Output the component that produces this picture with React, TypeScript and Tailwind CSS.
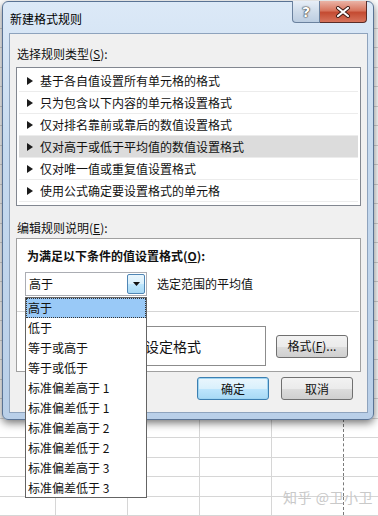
import React from "react";

const rules = [
  "基于各自值设置所有单元格的格式",
  "只为包含以下内容的单元格设置格式",
  "仅对排名靠前或靠后的数值设置格式",
  "仅对高于或低于平均值的数值设置格式",
  "仅对唯一值或重复值设置格式",
  "使用公式确定要设置格式的单元格",
];

const options = [
  "高于",
  "低于",
  "等于或高于",
  "等于或低于",
  "标准偏差高于 1",
  "标准偏差低于 1",
  "标准偏差高于 2",
  "标准偏差低于 2",
  "标准偏差高于 3",
  "标准偏差低于 3",
];

const rows = Array.from({ length: 27 }, (_, i) => i);
const cols = [0, 1, 2, 3, 4, 5];

function Sheet() {
  return (
    <div className="absolute left-0 top-[9px] w-[378px]">
      {rows.map((r) => (
        <div
          key={r}
          className={`flex border-b border-[#d6d6d6] ${r % 2 === 0 ? "h-[20px]" : "h-[19px]"}`}
        >
          {cols.map((c) => (
            <div
              key={c}
              className={`h-full shrink-0 ${c === 0 ? "w-[56px]" : "w-[72px]"} ${
                c === 4
                  ? "border-r border-dashed border-[#7a7a7a]"
                  : "border-r border-[#d6d6d6]"
              }`}
            />
          ))}
        </div>
      ))}
    </div>
  );
}

function Tri() {
  return (
    <svg width="6" height="8" viewBox="0 0 6 8" className="shrink-0">
      <polygon points="0,0 6,4 0,8" fill="#1b1b1b" />
    </svg>
  );
}

export default function App() {
  return (
    <div className="relative w-[378px] h-[516px] overflow-hidden bg-white font-['Noto_Sans_CJK_SC','Noto_Sans',sans-serif] text-[12px] text-[#111]">
      <Sheet />

      {/* watermark */}
      <div className="absolute left-[283px] top-[487px] text-[14px] leading-[20px] text-[#c9c9c9] tracking-[0.5px]">
        知乎 @卫小卫
      </div>

      {/* dialog window */}
      <div className="absolute left-[2px] top-[1px] w-[372px] h-[419px] rounded-[6px] border border-[#5a7394] bg-[linear-gradient(180deg,#dce9f7_0%,#c6daef_35%,#b9cfe8_100%)] shadow-[0_3px_8px_rgba(0,0,0,0.55)] flex flex-col">
        {/* title bar */}
        <div className="relative h-[31px] flex items-center pl-[7px] shrink-0">
          <span className="text-[12px] leading-[16px] text-black mt-[2px]">新建格式规则</span>
          <div className="absolute left-[289px] top-[-1px] flex h-[22px]">
            <div className="w-[28px] h-full rounded-bl-[4px] border border-[#6a819e] border-t-0 bg-[linear-gradient(180deg,#e7eef7_0%,#cfdcea_50%,#bccde1_100%)] flex items-center justify-center">
              <span className="text-[14px] font-bold text-white leading-none [text-shadow:0_0_1px_#333,0_0_1px_#333,0_0_2px_#444] font-['DejaVu_Sans',sans-serif]">?</span>
            </div>
            <div className="w-[47px] h-full rounded-br-[4px] border border-[#5a2c27] border-t-0 border-l-0 bg-[linear-gradient(180deg,#eab3a6_0%,#d8765f_45%,#c44b32_55%,#d7745c_100%)] flex items-center justify-center">
              <svg width="16" height="12" viewBox="0 0 16 12">
                <path d="M3 2 L13 10 M13 2 L3 10" stroke="#3a1a15" strokeWidth="4" strokeLinecap="round" />
                <path d="M3 2 L13 10 M13 2 L3 10" stroke="#ffffff" strokeWidth="2.2" strokeLinecap="round" />
              </svg>
            </div>
          </div>
        </div>

        {/* client area */}
        <div className="ml-[6px] w-[359px] h-[380px] border border-[#8ea3bd] bg-[#f0f0f0] flex flex-col">
          <div className="pl-[7px] mt-[12px] leading-[16px]">
            选择规则类型(<span className="underline">S</span>):
          </div>

          {/* rule list */}
          <div className="mx-[6px] mt-[5px] h-[139px] border border-[#828790] bg-white p-[2px]">
            {rules.map((r, i) => (
              <div
                key={r}
                className={`h-[22px] flex items-center pl-[8px] gap-[7px] border-b border-[#ececec] ${
                  i === 3 ? "bg-[#dcdcdc]" : ""
                }`}
              >
                <Tri />
                <span className="leading-[16px]">{r}</span>
              </div>
            ))}
          </div>

          <div className="pl-[7px] mt-[14px] leading-[16px]">
            编辑规则说明(<span className="underline">E</span>):
          </div>

          {/* description box */}
          <div className="mx-[6px] mt-[2px] h-[134px] border border-[#a0a0a0] bg-white flex flex-col">
            <div className="pl-[10px] pt-[9px] font-bold leading-[16px]">
              为满足以下条件的值设置格式(<span className="underline">O</span>):
            </div>
            <div className="flex items-center mt-[8px] pl-[8px]">
              <div className="w-[122px] h-[24px] border border-[#abadb3] bg-white flex items-center justify-between pl-[3px] pr-[1px]">
                <span className="leading-[16px]">高于</span>
                <div className="w-[18px] h-[20px] border border-[#4f86b5] rounded-[2px] bg-[linear-gradient(180deg,#eaf6fd_0%,#d9f0fc_50%,#bee6fd_51%,#a7d9f5_100%)] flex items-center justify-center">
                  <svg width="7" height="4" viewBox="0 0 7 4">
                    <polygon points="0,0 7,0 3.5,4" fill="#111" />
                  </svg>
                </div>
              </div>
              <span className="ml-[10px] leading-[16px]">选定范围的平均值</span>
            </div>
            <div className="mt-[15px] mr-[1px] border-t border-[#d5d5d5]" />
            <div className="flex items-center mt-[14px] pl-[10px] pr-[12px]">
              <div className="w-[43px] shrink-0" />
              <div className="w-[196px] h-[40px] border border-[#8c8c8c] bg-white flex items-center justify-center">
                <span className="text-[14px] leading-[18px] ml-[10px]">设定格式</span>
              </div>
              <button className="ml-[10px] w-[72px] h-[23px] rounded-[3px] border border-[#707070] bg-[linear-gradient(180deg,#f2f2f2_0%,#ebebeb_50%,#dddddd_51%,#cfcfcf_100%)] text-[12px] leading-[16px] text-[#111]">
                格式(<span className="underline">F</span>)...
              </button>
            </div>
          </div>

          {/* buttons */}
          <div className="flex justify-end gap-[12px] pr-[14px] mt-[5px]">
            <button className="w-[72px] h-[23px] rounded-[3px] border border-[#3c7fb1] bg-[linear-gradient(180deg,#eaf6fd_0%,#d9f0fc_50%,#bee6fd_51%,#a7d9f5_100%)] shadow-[inset_0_0_0_1px_#9fd5f3] text-[12px] leading-[16px] text-[#111]">
              确定
            </button>
            <button className="w-[72px] h-[23px] rounded-[3px] border border-[#707070] bg-[linear-gradient(180deg,#f2f2f2_0%,#ebebeb_50%,#dddddd_51%,#cfcfcf_100%)] text-[12px] leading-[16px] text-[#111]">
              取消
            </button>
          </div>
        </div>
      </div>

      {/* open dropdown list */}
      <div className="absolute left-[25px] top-[297px] w-[122px] h-[201px] border border-[#646464] bg-white">
        {options.map((o, i) => (
          <div
            key={o}
            className={`h-[20px] flex items-center pl-[2px] ${
              i === 0 ? "bg-[#99c9f7] outline-1 outline-dotted outline-[#333] -outline-offset-1" : ""
            }`}
          >
            <span className="leading-[16px]">{o}</span>
          </div>
        ))}
      </div>
    </div>
  );
}
